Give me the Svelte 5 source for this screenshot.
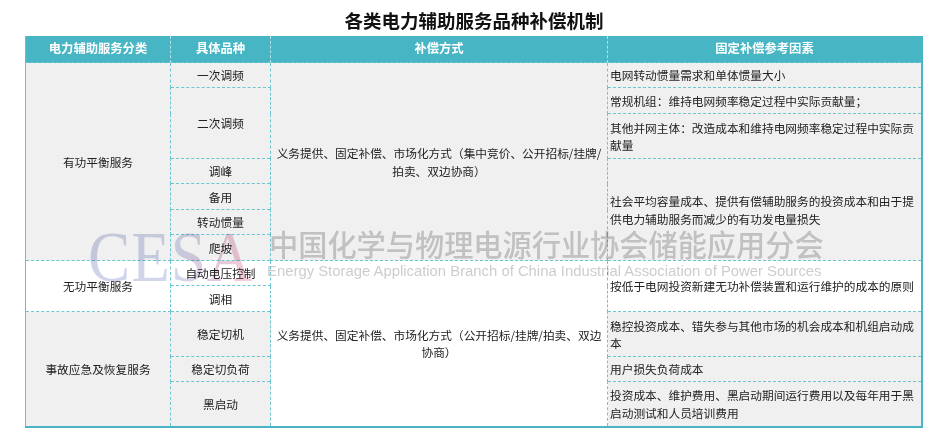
<script lang="ts">
	const rows = [
		{ height: 25, cells: [
			{ text: '有功平衡服务', rowspan: 7, kind: 'cat gray' },
			{ text: '一次调频', rowspan: 1, kind: 'item gray' },
			{ text: '义务提供、固定补偿、市场化方式（集中竞价、公开招标/挂牌/拍卖、双边协商）', rowspan: 7, kind: 'way gray' },
			{ text: '电网转动惯量需求和单体惯量大小', rowspan: 1, kind: 'factor gray' }
		] },
		{ height: 26, cells: [
			{ text: '二次调频', rowspan: 2, kind: 'item gray' },
			{ text: '常规机组：维持电网频率稳定过程中实际贡献量；', rowspan: 1, kind: 'factor gray' }
		] },
		{ height: 45, cells: [
			{ text: '其他并网主体：改造成本和维持电网频率稳定过程中实际贡献量', rowspan: 1, kind: 'factor gray' }
		] },
		{ height: 25, cells: [
			{ text: '调峰', rowspan: 1, kind: 'item gray' },
			{ text: '社会平均容量成本、提供有偿辅助服务的投资成本和由于提供电力辅助服务而减少的有功发电量损失', rowspan: 4, kind: 'factor gray' }
		] },
		{ height: 26, cells: [{ text: '备用', rowspan: 1, kind: 'item gray' }] },
		{ height: 25, cells: [{ text: '转动惯量', rowspan: 1, kind: 'item gray' }] },
		{ height: 26, cells: [{ text: '爬坡', rowspan: 1, kind: 'item gray' }] },
		{ height: 25, cells: [
			{ text: '无功平衡服务', rowspan: 2, kind: 'cat' },
			{ text: '自动电压控制', rowspan: 1, kind: 'item' },
			{ text: '义务提供、固定补偿、市场化方式（公开招标/挂牌/拍卖、双边协商）', rowspan: 5, kind: 'way' },
			{ text: '按低于电网投资新建无功补偿装置和运行维护的成本的原则', rowspan: 2, kind: 'factor' }
		] },
		{ height: 26, cells: [{ text: '调相', rowspan: 1, kind: 'item' }] },
		{ height: 45, cells: [
			{ text: '事故应急及恢复服务', rowspan: 3, kind: 'cat gray' },
			{ text: '稳定切机', rowspan: 1, kind: 'item gray' },
			{ text: '稳控投资成本、错失参与其他市场的机会成本和机组启动成本', rowspan: 1, kind: 'factor gray' }
		] },
		{ height: 25, cells: [
			{ text: '稳定切负荷', rowspan: 1, kind: 'item gray' },
			{ text: '用户损失负荷成本', rowspan: 1, kind: 'factor gray' }
		] },
		{ height: 45, cells: [
			{ text: '黑启动', rowspan: 1, kind: 'item gray' },
			{ text: '投资成本、维护费用、黑启动期间运行费用以及每年用于黑启动测试和人员培训费用', rowspan: 1, kind: 'factor gray' }
		] }
	];
</script>

<div class="page">
	<h1>各类电力辅助服务品种补偿机制</h1>
	<table>
		<colgroup>
			<col class="col-cat" />
			<col class="col-item" />
			<col class="col-way" />
			<col />
		</colgroup>
		<thead>
			<tr>
				<th>电力辅助服务分类</th>
				<th>具体品种</th>
				<th>补偿方式</th>
				<th>固定补偿参考因素</th>
			</tr>
		</thead>
		<tbody>
			{#each rows as row}
				<tr style="height: {row.height}px">
					{#each row.cells as cell}
						<td class={cell.kind} rowspan={cell.rowspan}>{cell.text}</td>
					{/each}
				</tr>
			{/each}
		</tbody>
	</table>

	<div class="watermark">
		<span class="logo">CESA</span>
		<div class="org">
			<span class="org-cn">中国化学与物理电源行业协会储能应用分会</span>
			<span class="org-en">Energy Storage Application Branch of China Industrial Association of Power Sources</span>
		</div>
	</div>
</div>

<style>
	:global(body) {
		margin: 0;
		background: #fff;
	}
	.page {
		position: relative;
		width: 898px;
		height: 436px;
		box-sizing: border-box;
		padding-top: 8px;
		margin-left: 25px;
		font-family: 'Noto Sans CJK SC', 'Noto Sans', sans-serif;
		color: #222;
	}
	h1 {
		margin: 0 0 3px;
		height: 25px;
		font-size: 18.5px;
		line-height: 25px;
		font-weight: 700;
		text-align: center;
		color: #111;
	}
	table {
		width: 898px;
		table-layout: fixed;
		border-collapse: collapse;
		border-left: 1px solid #62c1cd;
		border-right: 2px solid #48b5c4;
		border-bottom: 2px solid #48b5c4;
		font-size: 11.7px;
		line-height: 17.5px;
	}
	.col-cat {
		width: 145px;
	}
	.col-item {
		width: 100px;
	}
	.col-way {
		width: 337px;
	}
	th {
		height: 26px;
		padding: 0;
		background: #48b5c4;
		color: #fff;
		font-size: 12.3px;
		font-weight: 700;
		border-left: 1px dashed #b5e2e8;
	}
	th:first-child {
		border-left: none;
	}
	td {
		padding: 0;
		text-align: center;
		vertical-align: middle;
		background: #fff;
		border: 1px dashed #6cc6d2;
	}
	td.gray {
		background: #f0f0f0;
	}
	.way {
		padding: 0 5px;
	}
	.factor {
		padding: 0 2px;
		text-align: left;
	}
	.watermark {
		position: absolute;
		left: 63px;
		top: 221px;
		display: flex;
		align-items: flex-start;
		pointer-events: none;
		mix-blend-mode: multiply;
	}
	.logo {
		margin-right: -7px;
		font-family: 'Liberation Serif', serif;
		font-size: 72px;
		line-height: 72px;
		letter-spacing: 1px;
		background: linear-gradient(90deg, #cfd3e8 0%, #d3d7ea 55%, #e2c8da 78%, #f8ccd9 100%);
		-webkit-background-clip: text;
		background-clip: text;
		color: transparent;
		transform: scaleX(0.88);
		transform-origin: left center;
	}
	.org {
		display: flex;
		flex-direction: column;
		padding-top: 3px;
		color: #cdcdcd;
		white-space: nowrap;
	}
	.org-cn {
		font-size: 29.2px;
		font-weight: 500;
		line-height: 39px;
	}
	.org-en {
		font-family: 'Liberation Sans', Arial, sans-serif;
		font-size: 14.85px;
		line-height: 17px;
		margin-left: -2px;
	}
</style>
